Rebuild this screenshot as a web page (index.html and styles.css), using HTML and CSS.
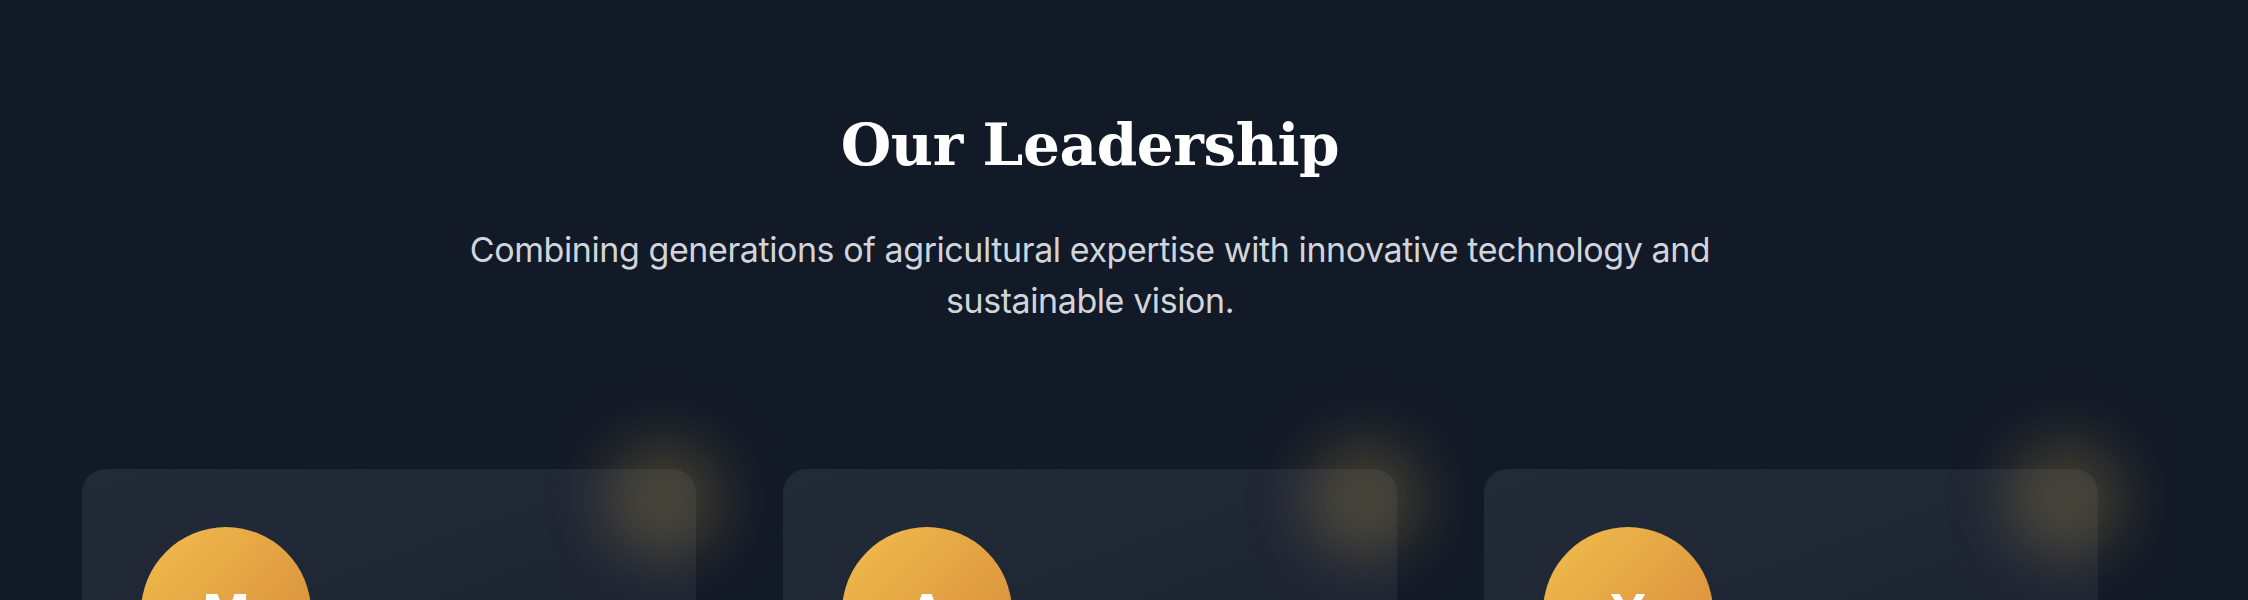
FILE: index.html
```html
<!DOCTYPE html>
<html lang="en">
<head>
<meta charset="utf-8">
<title>Our Leadership</title>
<link rel="stylesheet" href="styles.css">
</head>
<body>
<section class="leadership">
  <div class="inner">
    <header class="intro">
      <h2 class="title">Our Leadership</h2>
      <p class="lead">Combining generations of agricultural expertise with innovative technology and sustainable vision.</p>
    </header>
    <div class="cards">
      <article class="card">
        <div class="glow"></div>
        <div class="avatar"><span>M</span></div>
      </article>
      <article class="card">
        <div class="glow"></div>
        <div class="avatar"><span>A</span></div>
      </article>
      <article class="card">
        <div class="glow"></div>
        <div class="avatar"><span>Y</span></div>
      </article>
    </div>
  </div>
</section>
</body>
</html>
```

FILE: styles.css
```css
* { box-sizing: border-box; }
html, body {
  margin: 0;
  padding: 0;
  background: #111827;
  height: 600px;
  overflow: hidden;
}
.leadership {
  background: #121927;
  min-height: 600px;
}
.inner {
  width: 2180px;
  padding: 111px 82px 0;
}
.intro {
  display: flex;
  flex-direction: column;
  align-items: center;
  text-align: center;
}
.title {
  margin: 0;
  font-family: "DejaVu Serif", "Liberation Serif", serif;
  font-weight: 700;
  font-size: 58px;
  line-height: 1.2;
  letter-spacing: -0.4px;
  color: #ffffff;
}
.lead {
  margin: 43px 0 0;
  max-width: 1260px;
  font-family: Inter, "Noto Sans", sans-serif;
  font-size: 34px;
  line-height: 51px;
  letter-spacing: -0.42px;
  color: #d1d5db;
}
.cards {
  display: grid;
  grid-template-columns: repeat(3, 1fr);
  gap: 87px;
  margin-top: 143px;
}
.card {
  position: relative;
  height: 320px;
  padding: 58px 59px;
  border-radius: 24px;
  background: linear-gradient(160deg, #222a38 0%, #1b2130 100%);
}
.glow {
  position: absolute;
  top: -30px;
  right: -28px;
  width: 120px;
  height: 120px;
  border-radius: 50%;
  background: rgba(234, 190, 80, 0.22);
  filter: blur(30px);
  pointer-events: none;
}
.avatar {
  width: 170px;
  height: 170px;
  border-radius: 50%;
  background: linear-gradient(135deg, #f1bd4c 0%, #d4873a 100%);
  display: flex;
  align-items: center;
  justify-content: center;
}
.avatar span {
  font-family: Inter, "Noto Sans", sans-serif;
  font-weight: 700;
  font-size: 50px;
  color: #ffffff;
}
```
